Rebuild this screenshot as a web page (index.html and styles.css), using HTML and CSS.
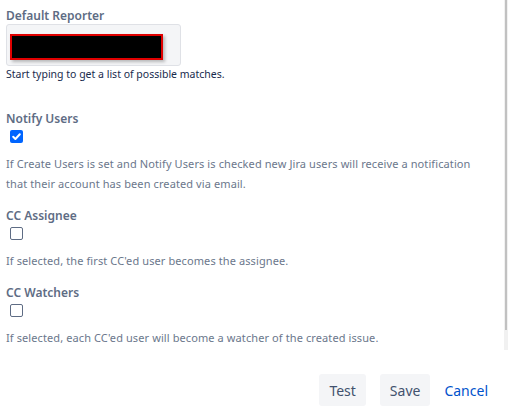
FILE: index.html
```html
<!DOCTYPE html>
<html>
<head>
<meta charset="utf-8">
<link rel="stylesheet" href="styles.css">
</head>
<body>
<div class="panel">
  <div class="content">
    <div class="field">
      <div class="label">Default Reporter</div>
      <div class="input">
        <div class="redact"></div>
      </div>
      <div class="hint">Start typing to get a list of possible matches.</div>
    </div>

    <div class="field notify">
      <div class="label">Notify Users</div>
      <span class="cb checked">
        <svg viewBox="0 0 13 13" width="13" height="13"><path d="M3.2 6.8 L5.4 9 L9.8 4.2" fill="none" stroke="#fff" stroke-width="2" stroke-linecap="round" stroke-linejoin="round"/></svg>
      </span>
      <div class="desc">If Create Users is set and Notify Users is checked new Jira users will receive a notification that their account has been created via email.</div>
    </div>

    <div class="field">
      <div class="label">CC Assignee</div>
      <span class="cb"></span>
      <div class="desc">If selected, the first CC'ed user becomes the assignee.</div>
    </div>

    <div class="field">
      <div class="label">CC Watchers</div>
      <span class="cb"></span>
      <div class="desc">If selected, each CC'ed user will become a watcher of the created issue.</div>
    </div>
  </div>
  <div class="scrollbar"><div class="thumb"></div></div>
</div>
<div class="actions">
  <button class="btn">Test</button>
  <button class="btn">Save</button>
  <a class="link">Cancel</a>
</div>
</body>
</html>
```
FILE: styles.css
```css
html, body {
  margin: 0;
  padding: 0;
  background: #fff;
  font-family: "Noto Sans", "Open Sans", sans-serif;
  color: #6b778c;
}
.panel {
  display: flex;
  height: 350px;
}
.content {
  flex: 1;
  padding: 8px 0 0 6px;
}
.scrollbar {
  width: 4px;
  margin-right: 1px;
  background: #f1f1f1;
  align-self: stretch;
}
.thumb {
  width: 2px;
  margin-left: 1px;
  height: 330px;
  background: #c1c1c1;
}
.label {
  font-size: 12px;
  font-weight: 600;
  color: #5e6c84;
  line-height: 16px;
}
.input {
  box-sizing: border-box;
  width: 175px;
  height: 42px;
  padding: 9px 0 0 3px;
  background: #f4f5f7;
  border: 1px solid #dfe1e6;
  border-radius: 3px;
}
.redact {
  width: 149px;
  height: 22px;
  background: #000;
  border: 2px solid #e00000;
  box-shadow: 2px 2px 3px rgba(0,0,0,0.25);
}
.hint {
  font-size: 10.5px;
  line-height: 16px;
  color: #172b4d;
}
.notify {
  margin-top: 29px;
}
.field + .field:not(.notify) {
  margin-top: 14px;
}
.cb {
  display: block;
  width: 11px;
  height: 11px;
  margin: 3px 0 0 4px;
  border: 1px solid #5e6c84;
  border-radius: 2px;
  background: #fff;
}
.cb.checked {
  width: 13px;
  height: 13px;
  border: none;
  background: #0065ff;
  border-radius: 2px;
}
.cb svg { display: block; }
.desc {
  max-width: 478px;
  font-size: 11px;
  letter-spacing: 0.1px;
  line-height: 20px;
  margin-top: 11px;
  color: #6b778c;
}
.actions {
  display: flex;
  align-items: center;
  justify-content: flex-end;
  padding: 24px 21px 0 0;
}
.btn {
  font-family: inherit;
  font-size: 14px;
  color: #42526e;
  background: #f4f5f7;
  border: none;
  border-radius: 3px;
  height: 32px;
  padding: 0 10px;
  margin-left: 14px;
}
.link {
  font-size: 14px;
  color: #0052cc;
  margin-left: 14px;
}
```
